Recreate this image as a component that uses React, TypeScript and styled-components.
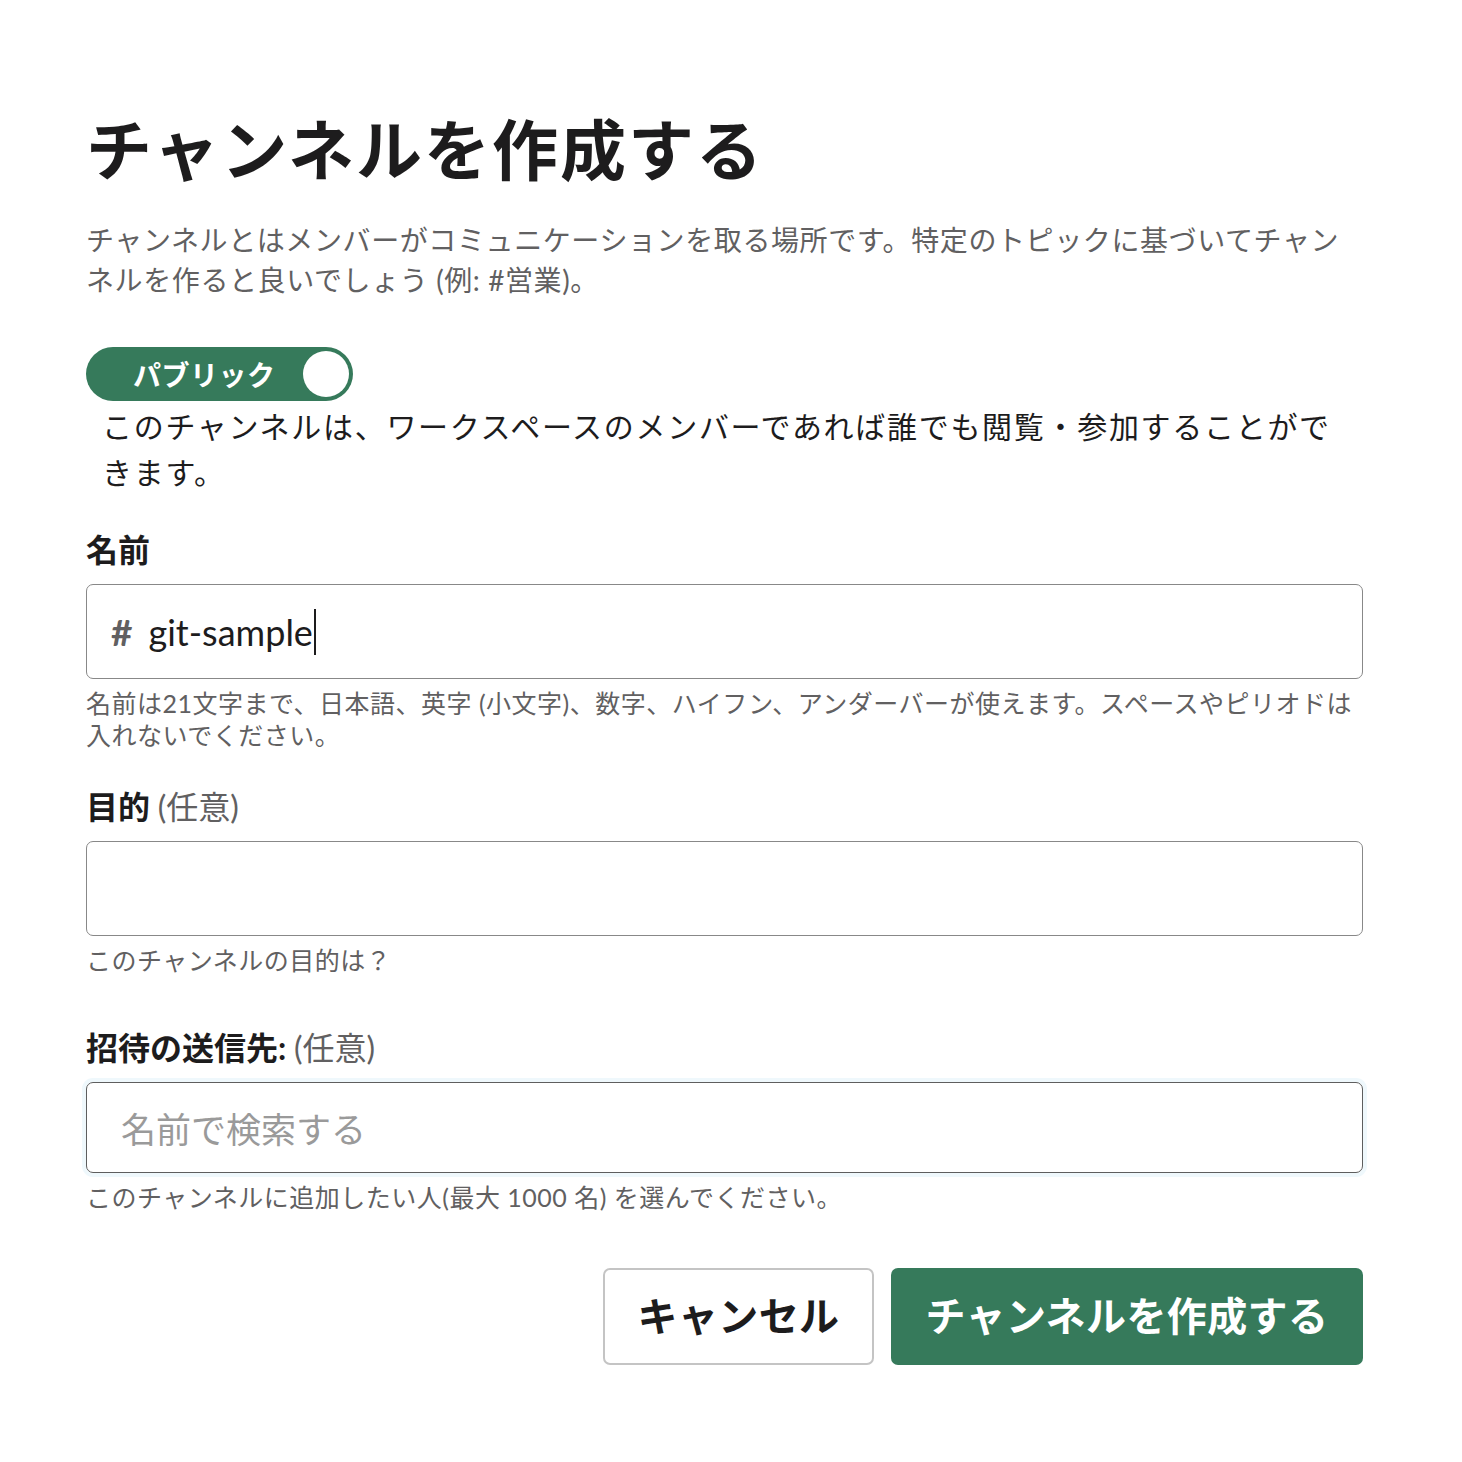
import React from 'react';
import styled, { createGlobalStyle } from 'styled-components';

const GlobalStyle = createGlobalStyle`
  html, body {
    margin: 0;
    padding: 0;
    background: #ffffff;
  }
  body {
    font-family: Lato, "Noto Sans CJK JP", sans-serif;
    color: #1d1c1d;
  }
`;

const green = '#367a5b';

const Page = styled.div`
  width: 1462px;
  min-height: 1462px;
  box-sizing: border-box;
  padding: 106px 99px 0 86px;
  display: flex;
  flex-direction: column;
`;

const Title = styled.h1`
  margin: 0;
  font-size: 66px;
  line-height: 88px;
  font-weight: 700;
  letter-spacing: 2px;
  color: #1d1c1d;
`;

const Lead = styled.p`
  margin: 26px 0 0;
  font-size: 28px;
  line-height: 40px;
  letter-spacing: 0.6px;
  color: #616061;
`;

const ToggleWrap = styled.div`
  margin-top: 47px;
  display: flex;
`;

const Toggle = styled.button`
  width: 267px;
  height: 54px;
  border: none;
  border-radius: 27px;
  background: ${green};
  padding: 0 4px 0 47px;
  display: flex;
  align-items: center;
  justify-content: space-between;
  cursor: pointer;
  font-family: inherit;
`;

const ToggleText = styled.span`
  color: #ffffff;
  font-size: 28px;
  font-weight: 700;
  letter-spacing: 0.5px;
`;

const Knob = styled.span`
  width: 46px;
  height: 46px;
  border-radius: 50%;
  background: #ffffff;
`;

const ToggleNote = styled.p`
  margin: 2px 16px 0 16px;
  font-size: 30px;
  line-height: 46px;
  letter-spacing: 1.7px;
  color: #1d1c1d;
`;

const Field = styled.div<{ $top: number }>`
  margin-top: ${({ $top }) => $top}px;
  display: flex;
  flex-direction: column;
`;

const Label = styled.label`
  font-size: 32px;
  line-height: 40px;
  font-weight: 700;
  color: #1d1c1d;
`;

const Optional = styled.span`
  font-weight: 400;
  color: #616061;
`;

const InputBox = styled.div<{ $height: number; $focused?: boolean }>`
  margin-top: 14px;
  height: ${({ $height }) => $height}px;
  box-sizing: border-box;
  border: 1.5px solid ${({ $focused }) => ($focused ? '#5e5e5e' : '#888888')};
  border-radius: 7px;
  display: flex;
  align-items: center;
  padding: 0 24px;
  box-shadow: ${({ $focused }) => ($focused ? '0 0 0 4px rgba(29, 155, 209, 0.07)' : 'none')};
`;

const Hash = styled.span`
  font-size: 37px;
  font-weight: 700;
  color: #616061;
  margin-right: 16px;
`;

const Value = styled.span`
  font-size: 36px;
  color: #1d1c1d;
  border-right: 2px solid #1d1c1d;
  line-height: 46px;
  padding-right: 1px;
`;

const Placeholder = styled.span`
  font-size: 35px;
  color: #9a9a9a;
  padding-left: 10px;
`;

const Hint = styled.p`
  margin: 8px 0 0;
  font-size: 25px;
  line-height: 32px;
  letter-spacing: 0.5px;
  color: #616061;
`;

const Actions = styled.div`
  margin-top: 55px;
  display: flex;
  justify-content: flex-end;
  gap: 17px;
`;

const Button = styled.button<{ $primary?: boolean }>`
  height: 97px;
  width: ${({ $primary }) => ($primary ? 472 : 271)}px;
  border-radius: 7px;
  border: ${({ $primary }) => ($primary ? 'none' : '2px solid #c4c4c4')};
  background: ${({ $primary }) => ($primary ? green : '#ffffff')};
  color: ${({ $primary }) => ($primary ? '#ffffff' : '#1d1c1d')};
  font-family: inherit;
  font-size: 40px;
  font-weight: 700;
  letter-spacing: 0.4px;
  padding-bottom: 6px;
  cursor: pointer;
`;

const App: React.FC = () => {
  return (
    <>
      <GlobalStyle />
      <Page>
        <Title>チャンネルを作成する</Title>
        <Lead>
          チャンネルとはメンバーがコミュニケーションを取る場所です。特定のトピックに基づいてチャンネルを作ると良いでしょう (例: #営業)。
        </Lead>

        <ToggleWrap>
          <Toggle type="button">
            <ToggleText>パブリック</ToggleText>
            <Knob />
          </Toggle>
        </ToggleWrap>
        <ToggleNote>
          このチャンネルは、ワークスペースのメンバーであれば誰でも閲覧・参加することができます。
        </ToggleNote>

        <Field $top={35}>
          <Label>名前</Label>
          <InputBox $height={95}>
            <Hash>#</Hash>
            <Value>git-sample</Value>
          </InputBox>
          <Hint>
            名前は21文字まで、日本語、英字 (小文字)、数字、ハイフン、アンダーバーが使えます。スペースやピリオドは入れないでください。
          </Hint>
        </Field>

        <Field $top={36}>
          <Label>
            目的 <Optional>(任意)</Optional>
          </Label>
          <InputBox $height={95} />
          <Hint>このチャンネルの目的は？</Hint>
        </Field>

        <Field $top={52}>
          <Label>
            招待の送信先: <Optional>(任意)</Optional>
          </Label>
          <InputBox $height={91} $focused>
            <Placeholder>名前で検索する</Placeholder>
          </InputBox>
          <Hint>このチャンネルに追加したい人(最大 1000 名) を選んでください。</Hint>
        </Field>

        <Actions>
          <Button type="button">キャンセル</Button>
          <Button type="button" $primary>
            チャンネルを作成する
          </Button>
        </Actions>
      </Page>
    </>
  );
};

export default App;
